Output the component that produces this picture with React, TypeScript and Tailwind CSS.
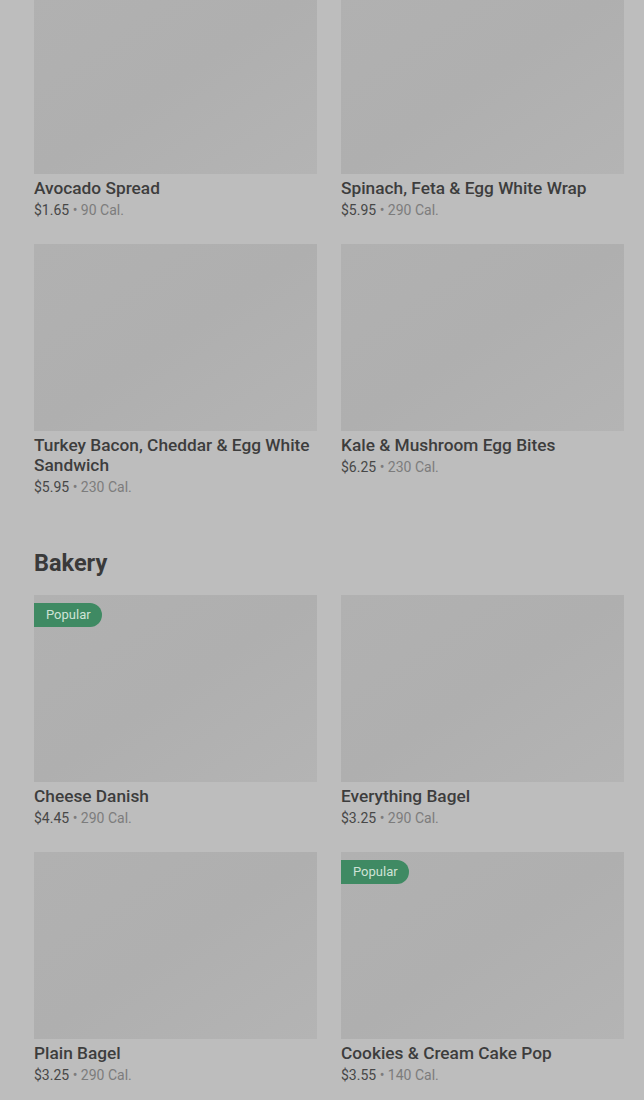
import React from "react";

type Item = { name: string; price: string; cal: string; popular?: boolean };

const rows1: Item[][] = [
  [
    { name: "Avocado Spread", price: "$1.65", cal: "90 Cal." },
    { name: "Spinach, Feta & Egg White Wrap", price: "$5.95", cal: "290 Cal." },
  ],
  [
    { name: "Turkey Bacon, Cheddar & Egg White Sandwich", price: "$5.95", cal: "230 Cal." },
    { name: "Kale & Mushroom Egg Bites", price: "$6.25", cal: "230 Cal." },
  ],
];

const rows2: Item[][] = [
  [
    { name: "Cheese Danish", price: "$4.45", cal: "290 Cal.", popular: true },
    { name: "Everything Bagel", price: "$3.25", cal: "290 Cal." },
  ],
  [
    { name: "Plain Bagel", price: "$3.25", cal: "290 Cal." },
    { name: "Cookies & Cream Cake Pop", price: "$3.55", cal: "140 Cal.", popular: true },
  ],
];

function Card({ item, first }: { item: Item; first?: boolean }) {
  return (
    <div className="flex flex-col">
      <div
        className={`relative h-[187px] bg-gradient-to-br from-[#b1b1b1] via-[#afafaf] to-[#b4b4b4] ${first ? "-mt-[13px]" : ""}`}
      >
        {item.popular && (
          <div className="absolute left-0 top-[8px] h-[24px] w-[68px] rounded-r-full bg-[#3f8a63] pl-[12px] text-[13px] leading-[24px] text-[#cfe3d6]">
            Popular
          </div>
        )}
      </div>
      <div className="mt-[3.5px] text-[17.3px] font-medium leading-[20px] text-[#3d3d3d]">{item.name}</div>
      <div className="mt-[2.5px] text-[14px] leading-[20px]">
        <span className="text-[#474747]">{item.price}</span>
        <span className="text-[#7c7c7c]"> • {item.cal}</span>
      </div>
    </div>
  );
}

export default function App() {
  return (
    <div
      className="min-h-[1100px] overflow-hidden bg-[#bdbdbd] pl-[34px] pr-[20px]"
      style={{ fontFamily: "Roboto, 'Noto Sans', sans-serif" }}
    >
      <div className="flex flex-col gap-[24px]">
        {rows1.map((r, i) => (
          <div key={i} className="grid grid-cols-2 gap-x-[24px] items-start">
            {r.map((it, j) => (
              <Card key={j} item={it} first={i === 0} />
            ))}
          </div>
        ))}
      </div>
      <h2 className="mt-[50px] text-[23.5px] font-bold leading-[32px] text-[#3a3a3a]">Bakery</h2>
      <div className="mt-[16px] flex flex-col gap-[24px]">
        {rows2.map((r, i) => (
          <div key={i} className="grid grid-cols-2 gap-x-[24px] items-start">
            {r.map((it, j) => (
              <Card key={j} item={it} />
            ))}
          </div>
        ))}
      </div>
    </div>
  );
}
